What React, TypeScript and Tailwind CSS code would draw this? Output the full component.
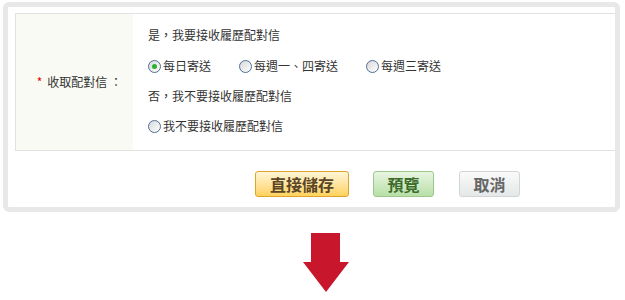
import React, { useState } from "react";

const FONT = { fontFamily: '"Noto Sans CJK TC", "Noto Sans", sans-serif' };

type Freq = "daily" | "monThu" | "wed" | "none";

function Radio({ checked, label, onClick }: { checked: boolean; label: string; onClick: () => void }) {
    return (
        <label className="flex items-center cursor-pointer" onClick={onClick}>
            <span className="w-[13px] h-[13px] rounded-full border border-[#4d6f96] bg-gradient-to-br from-[#d8d8d8] to-[#ffffff] flex items-center justify-center">
                {checked && <span className="w-[5px] h-[5px] rounded-full bg-[#2fb12f]" />}
            </span>
            <span className="ml-[2px]">{label}</span>
        </label>
    );
}

export default function App() {
    const [freq, setFreq] = useState<Freq>("daily");

    return (
        <div className="w-[625px] h-[300px] bg-white text-[12px] text-[#333]" style={FONT}>
            <div className="pt-[2px] pl-[3px]">
                <div className="w-[617px] h-[210px] border-[5px] border-[#e8e8e8] rounded-[6px] bg-white">
                    <div className="pt-[6px] pl-[7px]">
                        <div className="flex border border-r-0 border-[#e2e2e2]">
                            <div className="w-[117px] bg-[#fafaf4] flex items-center justify-end pr-[11px]">
                                <span className="text-[#e00] mr-[5px]">*</span>
                                <span>收取配對信 ：</span>
                            </div>
                            <div className="flex-1 pl-[15px] pt-[5px] pb-[9px]">
                                <div className="h-[32px] flex items-center">是，我要接收履歷配對信</div>
                                <div className="h-[30px] flex items-center gap-[28px]">
                                    <Radio checked={freq === "daily"} label="每日寄送" onClick={() => setFreq("daily")} />
                                    <Radio checked={freq === "monThu"} label="每週一、四寄送" onClick={() => setFreq("monThu")} />
                                    <Radio checked={freq === "wed"} label="每週三寄送" onClick={() => setFreq("wed")} />
                                </div>
                                <div className="h-[30px] flex items-center">否，我不要接收履歷配對信</div>
                                <div className="h-[30px] flex items-center">
                                    <Radio checked={freq === "none"} label="我不要接收履歷配對信" onClick={() => setFreq("none")} />
                                </div>
                            </div>
                        </div>
                        <div className="flex mt-[20px] pl-[240px]">
                            <button className="w-[94px] h-[26px] rounded-[3px] border border-[#dca42a] bg-gradient-to-b from-[#fff6d6] to-[#ffd25c] text-[16px] font-bold text-[#5a4626] leading-none">
                                直接儲存
                            </button>
                            <button className="ml-[24px] w-[61px] h-[26px] rounded-[3px] border border-[#9cc78d] bg-gradient-to-b from-[#e8f5e1] to-[#b8dfa6] text-[16px] font-bold text-[#3d6b2c] leading-none">
                                預覽
                            </button>
                            <button className="ml-[25px] w-[61px] h-[26px] rounded-[3px] border border-[#d2d5d5] bg-gradient-to-b from-[#fafafa] to-[#e4e8e8] text-[16px] font-bold text-[#666] leading-none">
                                取消
                            </button>
                        </div>
                    </div>
                </div>
            </div>
            <div className="ml-[302px] mt-[21px]">
                <svg width="48" height="60" viewBox="0 0 48 60">
                    <polygon points="9,0 38,0 38,29 47,29 24,59 1,29 9,29" fill="#c8172d" />
                </svg>
            </div>
        </div>
    );
}
